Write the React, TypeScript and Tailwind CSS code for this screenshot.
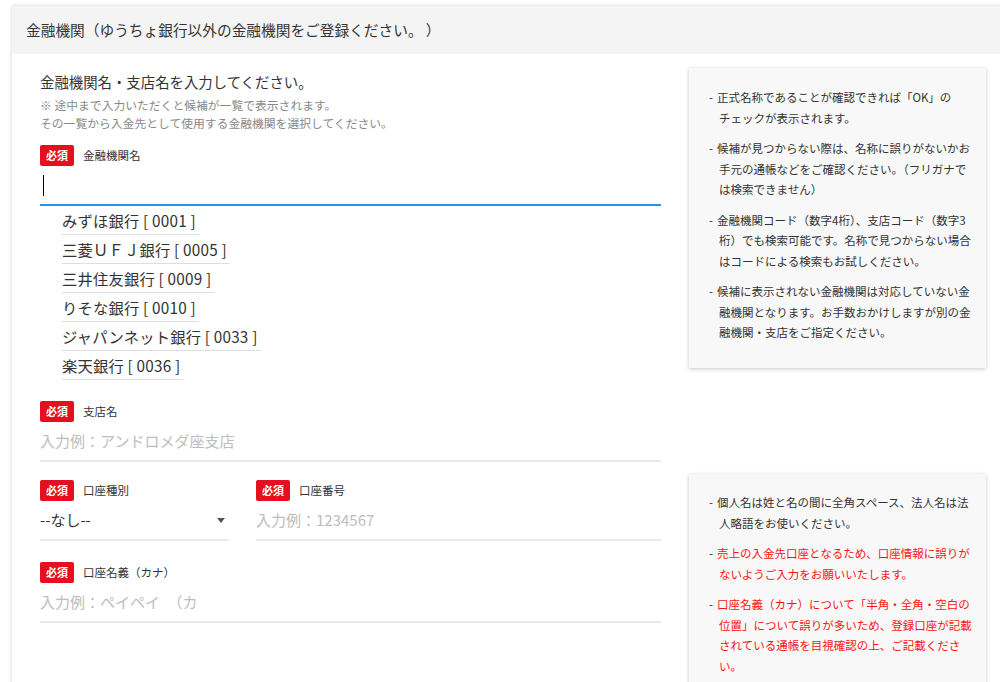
import React from "react";

const FONT = '"Noto Sans CJK JP", "Noto Sans", sans-serif';

function Badge() {
  return (
    <span className="inline-flex h-[21px] w-[34px] items-center justify-center rounded-[2px] bg-[#e50f1f] text-[11px] font-bold leading-none text-white">
      必須
    </span>
  );
}

function Label({ text }: { text: string }) {
  return (
    <div className="flex h-[21px] items-center gap-[9px]">
      <Badge />
      <span className="text-[11.5px] text-[#333]">{text}</span>
    </div>
  );
}

function Underlined({ children, w }: { children: React.ReactNode; w?: string }) {
  return (
    <div className={`flex h-[40px] items-center border-b-2 border-[#e8e8e8] text-[15px] ${w ?? ""}`}>{children}</div>
  );
}

const suggestions = [
  "みずほ銀行 [ 0001 ]",
  "三菱ＵＦＪ銀行 [ 0005 ]",
  "三井住友銀行 [ 0009 ]",
  "りそな銀行 [ 0010 ]",
  "ジャパンネット銀行 [ 0033 ]",
  "楽天銀行 [ 0036 ]",
];

function InfoItem({ lines, red }: { lines: string[]; red?: boolean }) {
  return (
    <div className={`flex text-[11.5px] leading-[20.5px] ${red ? "text-[#ff1414]" : "text-[#333]"}`}>
      <span className="w-[8px] shrink-0 text-[#333]">-</span>
      <div className="flex flex-col whitespace-nowrap">
        {lines.map((l, i) => (
          <span key={i} className={i === 0 ? "" : "pl-[2px]"}>
            {l}
          </span>
        ))}
      </div>
    </div>
  );
}

export default function App() {
  return (
    <div className="h-[682px] w-[1000px] overflow-hidden bg-white pl-[12px] pt-[6px]" style={{ fontFamily: FONT }}>
      <div className="min-h-[700px] w-[1000px] bg-white shadow-[0_0_4px_rgba(0,0,0,0.18)]">
        <div className="flex h-[48px] items-center bg-[#f4f4f4] pl-[14px] text-[14.7px] text-[#333]">
          金融機関（ゆうちょ銀行以外の金融機関をご登録ください。 ）
        </div>

        {/* Row 1 */}
        <div className="mt-[14px] flex">
          <div className="ml-[28px] w-[621px] pt-[4px]">
            <div className="text-[14.4px] leading-[20px] text-[#333]">金融機関名・支店名を入力してください。</div>
            <div className="mt-[4px] text-[11.8px] leading-[18px] text-[#888]">
              <div>※ 途中まで入力いただくと候補が一覧で表示されます。</div>
              <div>その一覧から入金先として使用する金融機関を選択してください。</div>
            </div>
            <div className="mt-[13px]">
              <Label text="金融機関名" />
              <div className="flex h-[40px] items-center border-b-2 border-[#2196f3] pl-[3px]">
                <div className="h-[21px] w-px bg-black" />
              </div>
            </div>
            <div className="flex flex-col items-start pl-[22px]">
              {suggestions.map((s) => (
                <div
                  key={s}
                  className="border-b border-[#dedede] pr-[3px] pt-[3px] pb-[3px] text-[15.3px] leading-[22px] tracking-[0.2px] text-[#333]"
                >
                  {s}
                </div>
              ))}
            </div>
            <div className="mt-[21px]">
              <Label text="支店名" />
              <Underlined>
                <span className="text-[#bdbdbd]">入力例：アンドロメダ座支店</span>
              </Underlined>
            </div>
          </div>
          <div className="ml-[28px] w-[297px]">
            <div className="flex h-[300px] flex-col gap-[10px] bg-[#f8f8f8] pl-[20px] pt-[19px] shadow-[0_1px_4px_rgba(0,0,0,0.22)]">
              <InfoItem lines={["正式名称であることが確認できれば「OK」の", "チェックが表示されます。"]} />
              <InfoItem
                lines={[
                  "候補が見つからない際は、名称に誤りがないかお",
                  "手元の通帳などをご確認ください。（フリガナで",
                  "は検索できません）",
                ]}
              />
              <InfoItem
                lines={[
                  "金融機関コード（数字4桁）、支店コード（数字3",
                  "桁）でも検索可能です。名称で見つからない場合",
                  "はコードによる検索もお試しください。",
                ]}
              />
              <InfoItem
                lines={[
                  "候補に表示されない金融機関は対応していない金",
                  "融機関となります。お手数おかけしますが別の金",
                  "融機関・支店をご指定ください。",
                ]}
              />
            </div>
          </div>
        </div>

        {/* Row 2 */}
        <div className="mt-[12px] flex">
          <div className="ml-[28px] w-[621px] pt-[6px]">
            <div className="flex gap-[28px]">
              <div className="w-[188px]">
                <Label text="口座種別" />
                <Underlined>
                  <span className="flex-1 text-[#333]">--なし--</span>
                  <svg width="8" height="5" viewBox="0 0 8 5" className="mr-[3px]">
                    <path d="M0 0 L8 0 L4 5 Z" fill="#555" />
                  </svg>
                </Underlined>
              </div>
              <div className="flex-1">
                <Label text="口座番号" />
                <Underlined>
                  <span className="text-[#bdbdbd]">入力例：1234567</span>
                </Underlined>
              </div>
            </div>
            <div className="mt-[21px]">
              <Label text="口座名義（カナ）" />
              <Underlined>
                <span className="text-[#bdbdbd]">入力例：ペイペイ　（カ</span>
              </Underlined>
            </div>
          </div>
          <div className="ml-[28px] w-[297px]">
            <div className="flex h-[260px] flex-col gap-[10px] bg-[#f8f8f8] pl-[20px] pt-[18px] shadow-[0_1px_4px_rgba(0,0,0,0.22)]">
              <InfoItem lines={["個人名は姓と名の間に全角スペース、法人名は法", "人略語をお使いください。"]} />
              <InfoItem red lines={["売上の入金先口座となるため、口座情報に誤りが", "ないようご入力をお願いいたします。"]} />
              <InfoItem
                red
                lines={[
                  "口座名義（カナ）について「半角・全角・空白の",
                  "位置」について誤りが多いため、登録口座が記載",
                  "されている通帳を目視確認の上、ご記載くださ",
                  "い。",
                ]}
              />
            </div>
          </div>
        </div>
      </div>
    </div>
  );
}
